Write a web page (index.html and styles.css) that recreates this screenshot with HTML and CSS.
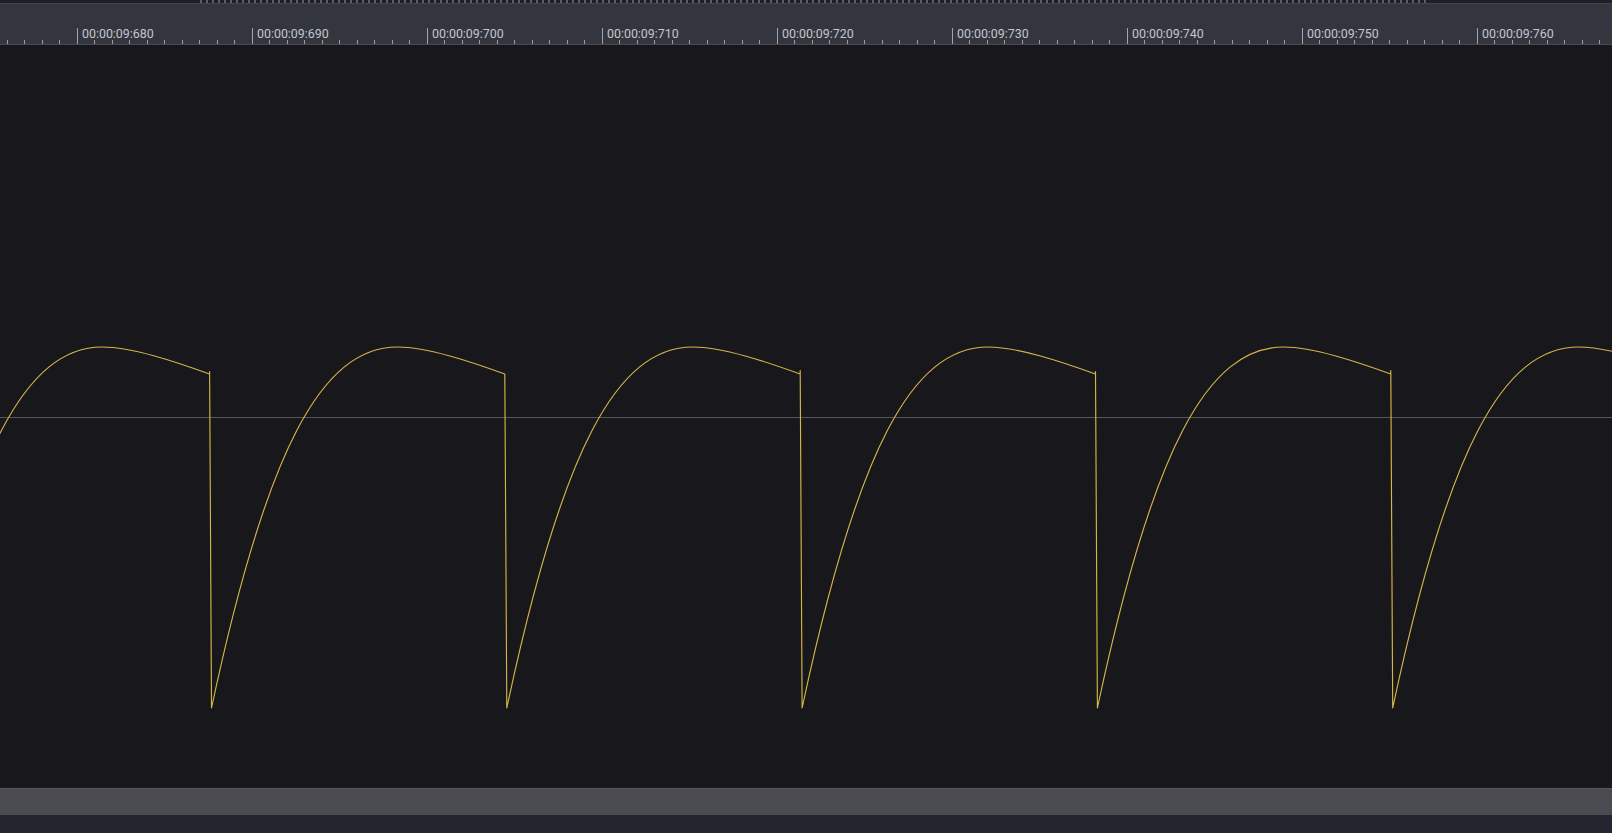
FILE: index.html
```html
<!DOCTYPE html>
<html>
<head>
<meta charset="utf-8">
<title>Waveform</title>
<link rel="stylesheet" href="styles.css">
</head>
<body>
<div class="app">
  <div class="overview"><div class="overview-ticks"></div></div>
  <div class="ruler">
    <div class="seg"><span class="label">00:00:09:680</span></div>
    <div class="seg"><span class="label">00:00:09:690</span></div>
    <div class="seg"><span class="label">00:00:09:700</span></div>
    <div class="seg"><span class="label">00:00:09:710</span></div>
    <div class="seg"><span class="label">00:00:09:720</span></div>
    <div class="seg"><span class="label">00:00:09:730</span></div>
    <div class="seg"><span class="label">00:00:09:740</span></div>
    <div class="seg"><span class="label">00:00:09:750</span></div>
    <div class="seg"><span class="label">00:00:09:760</span></div>
  </div>
  <div class="track">
    <svg class="wave" width="1612" height="743" viewBox="0 45 1612 743" xmlns="http://www.w3.org/2000/svg">
      <line x1="0" y1="417.5" x2="1612" y2="417.5" stroke="#55555a" stroke-width="1.2"/>
      <path fill="none" stroke="#d6b548" stroke-width="1.15" stroke-linejoin="round"
        d="M -83.8 708 C -28.8 450 26.2 347 102.2 347 C 132.2 347 176.2 362 209.5 374 L 209.6 371.5 L 211.5 708
           C 266.5 450 321.5 347 397.5 347 C 427.5 347 471.5 362 504.8 374 L 506.8 708
           C 561.8 450 616.8 347 692.8 347 C 722.8 347 766.8 362 800.1 374 L 800.2 370.5 L 802.1 708
           C 857.1 450 912.1 347 988.1 347 C 1018.1 347 1062.1 362 1095.4 374 L 1095.5 371.5 L 1097.4 708
           C 1152.4 450 1207.4 347 1283.4 347 C 1313.4 347 1357.4 362 1390.7 374 L 1390.8 370.5 L 1392.7 708
           C 1447.7 450 1502.7 347 1578.7 347 C 1608.7 347 1652.7 362 1686 374"/>
    </svg>
  </div>
  <div class="hscroll"></div>
  <div class="footer"></div>
</div>
</body>
</html>
```

FILE: styles.css
```css
html, body {
  margin: 0;
  padding: 0;
  background: #17171c;
  overflow: hidden;
}

*, *::before, *::after {
  box-sizing: border-box;
}

.app {
  width: 1612px;
  height: 833px;
  display: flex;
  flex-direction: column;
  font-family: Roboto, "Liberation Sans", sans-serif;
}

.overview {
  height: 4px;
  flex: none;
  background: #1f2026;
  border-bottom: 1px solid #42454d;
  display: flex;
}

.overview-ticks {
  margin-left: 200px;
  width: 1228px;
  height: 3px;
  background-image: repeating-linear-gradient(90deg, #5c5e66 0 2px, transparent 2px 6px);
}

.ruler {
  height: 41px;
  flex: none;
  display: flex;
  align-items: flex-end;
  padding-left: 77px;
  overflow: hidden;
  background-color: #33363f;
  background-image: linear-gradient(90deg, #9a9ca3 0 1px, transparent 1px 17.5px, #9a9ca3 17.5px 18.5px, transparent 18.5px 35px);
  background-size: 35px 4px;
  background-repeat: repeat-x;
  background-position: 7px 100%;
  border-bottom: 1px solid #474a52;
}

.seg {
  flex: none;
  width: 175px;
  height: 16px;
  border-left: 1px solid #a3a5ab;
  padding-left: 4px;
  display: flex;
  align-items: flex-start;
}

.label {
  font-size: 12.4px;
  line-height: 11px;
  color: #c4c6cb;
  white-space: nowrap;
}

.track {
  height: 743px;
  flex: none;
  background: #17171c;
  overflow: hidden;
}

.wave {
  display: block;
}

.hscroll {
  height: 27px;
  flex: none;
  background: #4a4b50;
  border-top: 1px solid #5f5354;
}

.footer {
  height: 18px;
  flex: none;
  background: #23262e;
}
```
